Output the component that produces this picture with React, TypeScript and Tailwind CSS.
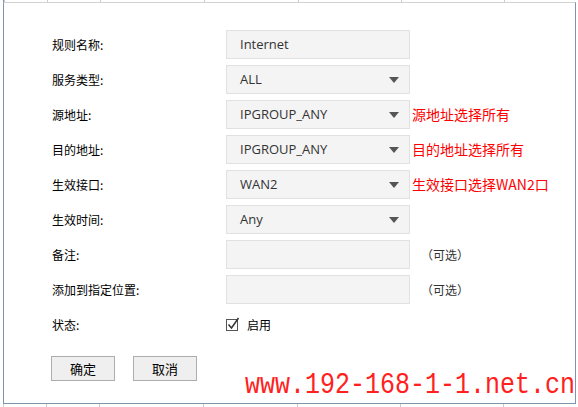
const rows = [
  { label: "规则名称:", value: "Internet", select: false },
  { label: "服务类型:", value: "ALL", select: true },
  { label: "源地址:", value: "IPGROUP_ANY", select: true, red: "源地址选择所有" },
  { label: "目的地址:", value: "IPGROUP_ANY", select: true, red: "目的地址选择所有" },
  { label: "生效接口:", value: "WAN2", select: true, red: "生效接口选择WAN2口" },
  { label: "生效时间:", value: "Any", select: true },
  { label: "备注:", value: "", select: false, note: "（可选）" },
  { label: "添加到指定位置:", value: "", select: false, note: "（可选）" },
];

const cn = { fontFamily: '"Noto Sans CJK SC", "Noto Sans", sans-serif' };
const latin = { fontFamily: '"Open Sans", "Noto Sans CJK SC", sans-serif' };

// little column separators of the tables above / below
function Ticks({ className }: { className: string }) {
  return (
    <div className={`flex ${className}`}>
      <div className="w-[43px] border-l border-[#c9cdd3]" />
      <div className="w-[53px] border-l border-[#c9cdd3]" />
      <div className="w-[104px] border-l border-[#c9cdd3]" />
      <div className="w-[94px] border-l border-[#c9cdd3]" />
      <div className="w-[103px] border-l border-[#c9cdd3]" />
      <div className="w-[103px] border-l border-[#c9cdd3]" />
      <div className="w-[73px] border-l border-[#c9cdd3]" />
    </div>
  );
}

export default function App() {
  return (
    <div className="relative w-[578px] h-[407px] bg-white overflow-hidden">
      <div className="flex h-[2px] ml-[3px]">
        <div className="w-px bg-[#7e94ab]" />
        <Ticks className="flex-1" />
      </div>

      <div className="ml-[3px] w-[573px] h-[402px] border-t border-t-[#d2d2d2] border-l border-r border-b border-l-[#7e94ab] border-r-[#7e94ab] border-b-[#7e94ab] pl-[48px] pt-[24px]">
        {rows.map((r) => (
          <div key={r.label} className="flex items-center h-[35px]">
            <div className="w-[174px] text-[12px] text-black" style={cn}>
              {r.label}
            </div>
            <div className="flex items-center w-[184px] h-[29px] bg-[#f4f4f4] border border-[#e1e1e1] pl-[13px] pr-[10px]">
              <span className="flex-1 text-[13px] text-[#333]" style={latin}>
                {r.value}
              </span>
              {r.select && (
                <svg width="10" height="6" viewBox="0 0 10 6">
                  <path d="M0 0h10L5 6z" fill="#555" />
                </svg>
              )}
            </div>
            {r.red && (
              <span className="ml-[2px] text-[14px] text-[#ff0000]" style={cn}>
                {r.red}
              </span>
            )}
            {r.note && (
              <span className="ml-[11px] text-[12px] text-[#333]" style={cn}>
                {r.note}
              </span>
            )}
          </div>
        ))}

        <div className="flex items-center h-[35px]">
          <div className="w-[174px] text-[12px] text-black" style={cn}>
            状态:
          </div>
          <div className="flex items-center gap-[7px]">
            <svg width="14" height="15" viewBox="0 0 14 15">
              <rect x="0.5" y="2.5" width="11" height="11" fill="#fff" stroke="#555" />
              <path d="M2.5 7.5l3 3.5L12.5 1" fill="none" stroke="#333" strokeWidth="1.5" />
            </svg>
            <span className="text-[12px] text-black" style={cn}>
              启用
            </span>
          </div>
        </div>

        <div className="flex gap-[18px] mt-[14px] -ml-[1px]">
          <button className="w-[64px] h-[25px] bg-[#efefef] border border-[#adadad] text-[13px] text-black" style={cn}>
            确定
          </button>
          <button className="w-[64px] h-[25px] bg-[#efefef] border border-[#adadad] text-[13px] text-black" style={cn}>
            取消
          </button>
        </div>
      </div>

      <Ticks className="ml-[3px] h-[3px]" />

      <div
        className="absolute left-[245px] top-[374px] text-[25px] leading-[30px] text-[#ff2020] origin-bottom scale-y-[1.2] whitespace-nowrap"
        style={{ fontFamily: '"Liberation Mono", monospace' }}
      >
        www.192-168-1-1.net.cn
      </div>
    </div>
  );
}
